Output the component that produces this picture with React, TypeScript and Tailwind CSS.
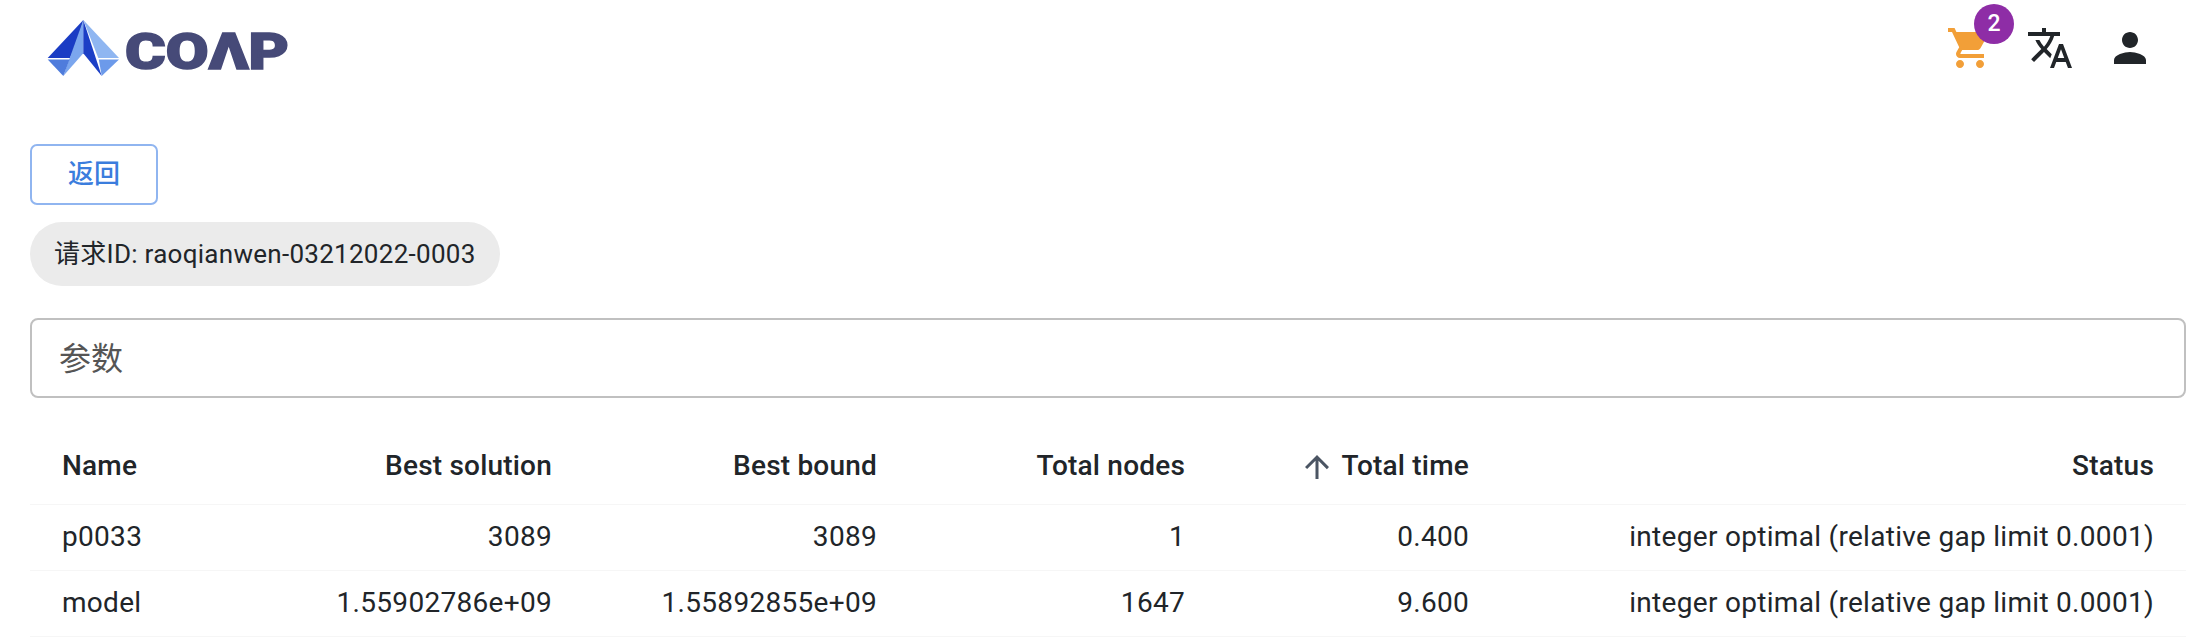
const FONT = "font-['Roboto','Noto_Sans_CJK_SC',sans-serif]";

function Logo() {
  return (
    <svg width="254" height="58" viewBox="47 19 254 58" aria-label="COAP">
      <polygon points="83.3,20 47.7,58 70,58 78,40" fill="#1a3cc4" />
      <polygon points="83.3,20 70,58 78,40" fill="#0f2a9e" />
      <polygon points="83.3,20 63.3,76 83.3,53.3" fill="#7ba6ee" />
      <polygon points="83.3,20 101.7,76 83.3,53.3" fill="#1c3fc6" />
      <polygon points="83.3,20 119,58 98.3,58" fill="#8fb6f1" />
      <polygon points="98.8,59.5 119,59.5 101.7,76" fill="#6c9aea" />
      <polygon points="47.7,59.5 69.6,59.5 63.3,76" fill="#4f7cdc" />
      <text
        x="125"
        y="69"
        fontFamily="Roboto, sans-serif"
        fontWeight="900"
        fontSize="50"
        textLength="164"
        lengthAdjust="spacingAndGlyphs"
        fill="#464a78"
        stroke="#464a78"
        strokeWidth="1.5"
      >
        COΛP
      </text>
    </svg>
  );
}

const rows = [
  ["p0033", "3089", "3089", "1", "0.400", "integer optimal (relative gap limit 0.0001)"],
  ["model", "1.55902786e+09", "1.55892855e+09", "1647", "9.600", "integer optimal (relative gap limit 0.0001)"],
];

const headers = ["Name", "Best solution", "Best bound", "Total nodes", "Total time", "Status"];

export default function App() {
  return (
    <div className={`${FONT} bg-white text-[#212529] h-[644px] overflow-hidden`}>
      <header className="h-[96px] flex items-center justify-between pl-[47px] pr-[22px]">
        <Logo />
        <div className="flex items-center">
          <button className="relative w-[80px] h-[80px] flex items-center justify-center">
            <svg viewBox="0 0 24 24" className="w-[48px] h-[48px] fill-[#f29f38]">
              <path d="M7 18c-1.1 0-1.99.9-1.99 2S5.9 22 7 22s2-.9 2-2-.9-2-2-2zM1 2v2h2l3.6 7.59-1.35 2.45c-.16.28-.25.61-.25.96 0 1.1.9 2 2 2h12v-2H7.42c-.14 0-.25-.11-.25-.25l.03-.12.9-1.63h7.45c.75 0 1.41-.41 1.75-1.03l3.58-6.47c.08-.14.12-.31.12-.48 0-.55-.45-1-1-1H5.21l-.94-2H1zm16 16c-1.1 0-1.99.9-1.99 2s.89 2 1.99 2 2-.9 2-2-.9-2-2-2z" />
            </svg>
            <span className="absolute left-[44px] top-[-4px] w-[40px] h-[40px] rounded-full bg-[#8e2da6] text-white text-[23px] font-medium flex items-center justify-center">
              2
            </span>
          </button>
          <button className="w-[80px] h-[80px] flex items-center justify-center">
            <svg viewBox="0 0 24 24" className="w-[48px] h-[48px] fill-[#212529]">
              <path d="M12.87 15.07l-2.54-2.51.03-.03c1.74-1.94 2.98-4.17 3.71-6.53H17V4h-7V2H8v2H1v1.99h11.17C11.5 7.92 10.44 9.75 9 11.35 8.07 10.32 7.3 9.19 6.69 8h-2c.73 1.63 1.73 3.17 2.98 4.56l-5.09 5.02L4 19l5-5 3.11 3.11.76-2.04zM18.5 10h-2L12 22h2l1.12-3h4.75L21 22h2l-4.5-12zm-2.62 7l1.62-4.33L19.12 17h-3.24z" />
            </svg>
          </button>
          <button className="w-[80px] h-[80px] flex items-center justify-center">
            <svg viewBox="0 0 24 24" className="w-[48px] h-[48px] fill-[#212529]">
              <path d="M12 12c2.21 0 4-1.79 4-4s-1.79-4-4-4-4 1.79-4 4 1.79 4 4 4zm0 2c-2.67 0-8 1.34-8 4v2h16v-2c0-2.66-5.33-4-8-4z" />
            </svg>
          </button>
        </div>
      </header>

      <main className="pl-[30px] pr-[6px] pt-[48px]">
        <button className="w-[128px] h-[61px] rounded-[7px] border-2 border-[#90b5f0] text-[#3b7ddd] text-[26px] font-medium flex items-center justify-center">
          返回
        </button>

        <div className="mt-[17px] w-[470px] h-[64px] rounded-full bg-[#ebebeb] pl-[24px] flex items-center text-[26px] tracking-[0.28px] whitespace-nowrap">
          请求ID: raoqianwen-03212022-0003
        </div>

        <div className="mt-[32px] h-[80px] rounded-[8px] border-2 border-[#c0c0c0] pl-[27px] pt-[2px] flex items-center text-[32px] text-[#555]">
          参数
        </div>

        <table className="mt-[40px] w-full table-fixed border-collapse text-[28px] tracking-[0.3px]">
          <colgroup>
            <col className="w-[200px]" />
            <col className="w-[354px]" />
            <col className="w-[325px]" />
            <col className="w-[308px]" />
            <col className="w-[284px]" />
            <col className="w-[685px]" />
          </colgroup>
          <thead>
            <tr className="h-[66px] border-b border-[#f6f6f6]">
              {headers.map((h, i) => (
                <th key={h} className="px-[32px] pb-[10px] font-medium">
                  <span className={`flex items-center h-[36px] tracking-[0.2px] ${i === 0 ? "justify-start" : "justify-end"}`}>
                    {h === "Total time" && (
                      <svg viewBox="0 0 24 24" className="w-[36px] h-[36px] mr-[7px] mt-[2px] fill-[#4b5563]">
                        <path d="M4 12l1.41 1.41L11 7.83V20h2V7.83l5.58 5.59L20 12l-8-8-8 8z" />
                      </svg>
                    )}
                    {h}
                  </span>
                </th>
              ))}
            </tr>
          </thead>
          <tbody>
            {rows.map((r) => (
              <tr key={r[0]} className="h-[66px] border-b border-[#f6f6f6]">
                {r.map((c, i) => (
                  <td key={i} className={`px-[32px] ${i === 0 ? "text-left" : "text-right"}`}>
                    {c}
                  </td>
                ))}
              </tr>
            ))}
          </tbody>
        </table>
      </main>
    </div>
  );
}
